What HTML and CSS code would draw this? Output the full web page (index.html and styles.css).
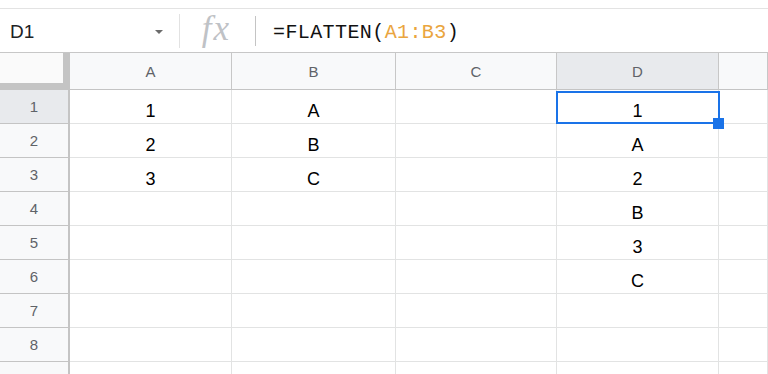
FILE: index.html
```html
<!DOCTYPE html>
<html lang="en">
<head>
  <meta charset="UTF-8" />
  <title>FLATTEN - Sheet</title>
  <meta name="viewport" content="width=device-width, initial-scale=1.0" />
  <link rel="stylesheet" href="styles.css">
</head>
<body>
  <div class="top-strip"></div>
  <div class="formula-bar">
    <div class="name-box">
      <span>D1</span>
      <span class="caret"></span>
    </div>
    <div class="fx"><span>fx</span></div>
    <div class="formula">=FLATTEN(<span class="range">A1:B3</span>)</div>
  </div>
  <div class="sheet">
    <div class="corner"></div>
    <div class="col-head">A</div>
    <div class="col-head">B</div>
    <div class="col-head">C</div>
    <div class="col-head active">D</div>
    <div class="col-head"></div>

    <div class="row-head active">1</div>
    <div class="cell">1</div>
    <div class="cell">A</div>
    <div class="cell"></div>
    <div class="cell selected">1<span class="sel-box"></span><span class="sel-handle"></span></div>
    <div class="cell"></div>

    <div class="row-head">2</div>
    <div class="cell">2</div>
    <div class="cell">B</div>
    <div class="cell"></div>
    <div class="cell">A</div>
    <div class="cell"></div>

    <div class="row-head">3</div>
    <div class="cell">3</div>
    <div class="cell">C</div>
    <div class="cell"></div>
    <div class="cell">2</div>
    <div class="cell"></div>

    <div class="row-head">4</div>
    <div class="cell"></div>
    <div class="cell"></div>
    <div class="cell"></div>
    <div class="cell">B</div>
    <div class="cell"></div>

    <div class="row-head">5</div>
    <div class="cell"></div>
    <div class="cell"></div>
    <div class="cell"></div>
    <div class="cell">3</div>
    <div class="cell"></div>

    <div class="row-head">6</div>
    <div class="cell"></div>
    <div class="cell"></div>
    <div class="cell"></div>
    <div class="cell">C</div>
    <div class="cell"></div>

    <div class="row-head">7</div>
    <div class="cell"></div>
    <div class="cell"></div>
    <div class="cell"></div>
    <div class="cell"></div>
    <div class="cell"></div>

    <div class="row-head">8</div>
    <div class="cell"></div>
    <div class="cell"></div>
    <div class="cell"></div>
    <div class="cell"></div>
    <div class="cell"></div>

    <div class="row-head">9</div>
    <div class="cell"></div>
    <div class="cell"></div>
    <div class="cell"></div>
    <div class="cell"></div>
    <div class="cell"></div>
  </div>
</body>
</html>
```

FILE: styles.css
```css
* { box-sizing: border-box; }
body { margin: 0; background: #fff; font-family: 'Liberation Sans', Arial, sans-serif; color: #000; overflow: hidden; }

.top-strip { height: 9px; border-bottom: 1px solid #e3e3e3; }

.formula-bar { height: 44px; display: flex; align-items: center; border-bottom: 1px solid #c7c7c7; }
.name-box { width: 180px; height: 34px; display: flex; align-items: center; justify-content: space-between; padding: 2px 16px 0 10px; font-size: 19px; color: #202124; border-right: 1px solid #e2e2e2; }
.caret { width: 0; height: 0; border-left: 4px solid transparent; border-right: 4px solid transparent; border-top: 4px solid #6b6b6b; margin-top: 1px; }
.fx { width: 76px; height: 30px; display: flex; align-items: center; justify-content: center; border-right: 1px solid #c4c4c4; }
.fx span { font-family: 'Liberation Serif', 'Times New Roman', serif; font-style: italic; font-size: 35px; color: #bfc2c6; letter-spacing: 2px; margin: -3px 0 0 -2px; }
.formula { padding: 3px 0 0 17px; font-family: 'Liberation Mono', 'DejaVu Sans Mono', monospace; font-size: 20px; letter-spacing: 0.4px; color: #111; }
.range { color: #eaa53e; }

.sheet { display: grid; grid-template-columns: 70px 162px 164px 161px 162px 1fr; grid-template-rows: 37px; grid-auto-rows: 34px; }
.sheet > div { border-right: 1px solid #e2e3e3; border-bottom: 1px solid #e2e3e3; }

.corner { background: #fafafa; box-shadow: inset -5px -6px 0 #c4c4c4; border-right: 2px solid #c4c4c4 !important; border-bottom-color: #c4c4c4 !important; }
.col-head { background: #f8f9fa; display: flex; align-items: center; justify-content: center; font-size: 15px; color: #5f6368; border-right-color: #c7c7c7 !important; border-bottom-color: #c4c4c4 !important; }
.row-head { background: #f8f9fa; display: flex; align-items: center; justify-content: center; font-size: 15px; color: #5f6368; border-right: 2px solid #c4c4c4 !important; border-bottom-color: #c4c4c4 !important; }
.active { background: #e8eaed; }

.cell { display: flex; align-items: flex-end; justify-content: center; padding-bottom: 2px; font-size: 18px; line-height: 20px; }
.selected { position: relative; }
.sel-box { position: absolute; top: 1px; left: -1px; right: -2px; bottom: -1px; border: 2px solid #1a73e8; }
.sel-handle { position: absolute; right: -6px; bottom: -6px; width: 11px; height: 11px; background: #1a73e8; z-index: 2; }
```
